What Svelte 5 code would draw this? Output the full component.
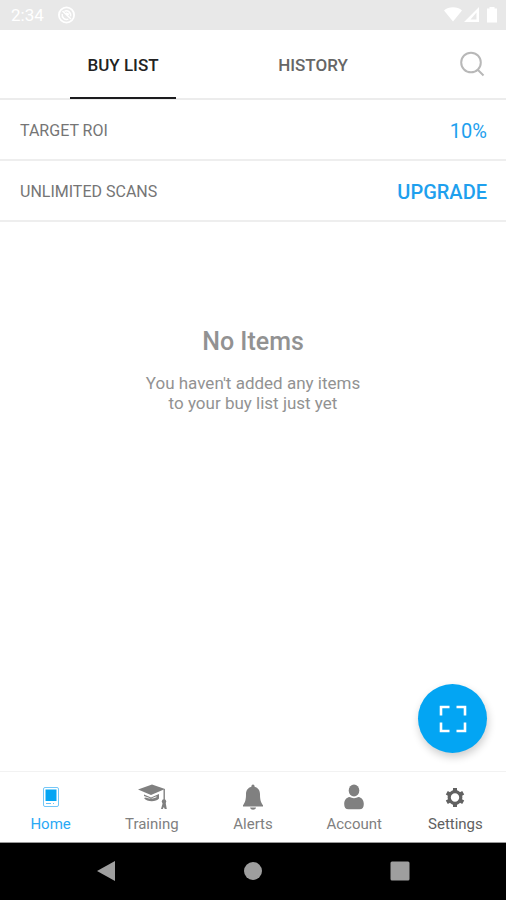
<script>
  const tabs = ['BUY LIST', 'HISTORY'];
  let activeTab = $state('BUY LIST');

  const destinations = ['Home', 'Training', 'Alerts', 'Account', 'Settings'];
  let current = $state('Home');
</script>

<div class="screen">
  <div class="status">
    <span class="time">2:34</span>
    <svg width="18" height="18" viewBox="0 0 18 18" fill="none" stroke="#fff" aria-hidden="true">
      <circle cx="8.500" cy="9" r="7.600" stroke-width="1.800" />
      <path d="M6.500 5.200a4.400 4.400 0 0 1 6 5.200M4.300 8a4.400 4.400 0 0 0 6 5.100M4.500 5l8.500 8M8 7l3 1.500" stroke-width="1.500" />
    </svg>
    <svg class="signals" width="54" height="18" viewBox="0 0 54 18" fill="#fff" aria-hidden="true">
      <path d="M0 4.500C4.500.200 13.500.200 18 4.500L9 15.500z" />
      <path fill-rule="evenodd" d="M35 1v15H20zM32.500 6.500L26.500 13.500H32.500z" />
      <path d="M45.500 1h5v1.500H53V16.500H43V2.500h2.500z" />
    </svg>
  </div>

  <header>
    <div class="tabs" role="tablist">
      {#each tabs as tab}
        <button class="tab" role="tab" aria-selected={activeTab === tab} onclick={() => (activeTab = tab)}>
          <span>{tab}</span>
        </button>
      {/each}
    </div>
    <button class="search" aria-label="Search">
      <svg width="26" height="26" viewBox="0 0 26 26" fill="none" stroke="#b8b8b8" stroke-width="2">
        <circle cx="11" cy="11.500" r="9.800" />
        <path d="M17.500 18.500l6 6" />
      </svg>
    </button>
  </header>

  <section class="row">
    <span>TARGET ROI</span>
    <button class="value">10%</button>
  </section>
  <section class="row">
    <span>UNLIMITED SCANS</span>
    <button class="value strong">UPGRADE</button>
  </section>

  <main>
    <h1>No Items</h1>
    <p>You haven't added any items<br />to your buy list just yet</p>
    <button class="scan" aria-label="Scan">
      <svg width="28" height="28" viewBox="0 0 28 28" fill="none" stroke="#fff" stroke-width="2.600">
        <path d="M2 10.500V2H10.500M17.500 2H26V10.500M26 17.500V26H17.500M10.500 26H2V17.500" />
      </svg>
    </button>
  </main>

  <nav class="bottom">
    {#each destinations as name}
      <button class="item" class:current={current === name} class:dark={name === 'Settings'} onclick={() => (current = name)}>
        <svg width="32" height="28" viewBox="0 0 32 28" fill="currentColor" aria-hidden="true">
          {#if name === 'Home'}
            <rect x="8.500" y="4.500" width="15" height="19" rx="1.500" fill="none" stroke="currentColor" opacity=".65" />
            <path d="M10.500 6.500h11v11.500h-11z" fill="#03a5f3" />
            <path d="M11 20.500h5M18 20.500h1" fill="none" stroke="currentColor" opacity=".7" />
          {:else if name === 'Training'}
            <path d="M2 6.500L16 1.500l13 4.500-14 6z" />
            <path d="M8 11.500l7 3 8-3.500v4.500c-3 3.800-12 3.800-15-.500l2-.500c2.500 1.300 7 1.500 10.500-.200v-1l-5.500 2.200-7-2.500z" />
            <path d="M28.200 6v11" fill="none" stroke="currentColor" stroke-width="1.400" />
            <circle cx="28" cy="18.500" r="2.200" />
            <path d="M27 19h2.500l1.300 7h-2l-1-2-1 2h-1.800z" />
          {:else if name === 'Alerts'}
            <path d="M16 1.500c1.200 0 1.600 1 1.600 2.200 3.700 1 5.400 4 5.400 7.500 0 5.500.800 8 3 11V23.500H6v-1.300c2.200-3 3-5.500 3-11 0-3.500 1.700-6.500 5.400-7.500 0-1.200.400-2.200 1.600-2.200z" />
            <path d="M13 24.500h6c-.500 1.800-1.500 2.200-3 2.200s-2.500-.400-3-2.200z" />
          {:else if name === 'Account'}
            <ellipse cx="16" cy="7.500" rx="5.300" ry="6" />
            <path d="M11.500 14c2.800 1.500 6.200 1.500 9 0 3.600.700 5.300 3.500 5.300 7 0 3.500-1.300 5.200-4.300 5.200h-11c-3 0-4.300-1.700-4.300-5.200 0-3.500 1.700-6.300 5.300-7z" />
          {:else}
            <circle cx="16" cy="14.500" r="5.800" fill="none" stroke="currentColor" stroke-width="3.200" />
            <path d="M16 5v3M16 21v3M7.800 9.700l2.600 1.500M21.600 17.800l2.600 1.500M24.200 9.700l-2.600 1.500M10.400 17.800l-2.600 1.500" fill="none" stroke="currentColor" stroke-width="4" />
          {/if}
        </svg>
        <span>{name}</span>
      </button>
    {/each}
  </nav>

  <div class="system">
    <button aria-label="Back">
      <svg width="20" height="22" viewBox="0 0 20 22" fill="#9e9e9e"><path d="M1 11L19 1v20z" /></svg>
    </button>
    <button aria-label="Home screen">
      <svg width="20" height="20" viewBox="0 0 20 20" fill="#9e9e9e"><circle cx="10" cy="10" r="9" /></svg>
    </button>
    <button aria-label="Recent apps">
      <svg width="20" height="20" viewBox="0 0 20 20" fill="#9e9e9e"><rect x=".500" y=".500" width="19" height="19" rx="1.500" /></svg>
    </button>
  </div>
</div>

<style>
  .screen {
    display: flex;
    flex-direction: column;
    min-height: 100vh;
    background: #fff;
    color: #757575;
    font-family: Roboto, 'Liberation Sans', sans-serif;
  }

  button {
    margin: 0;
    padding: 0;
    border: 0;
    background: none;
    color: inherit;
    font: inherit;
    cursor: pointer;
  }

  svg {
    display: block;
  }

  .status {
    display: flex;
    align-items: center;
    gap: 14px;
    height: 30px;
    padding: 0 8px 0 11px;
    box-sizing: border-box;
    background: #e8e8e8;
    color: #fff;
    font-size: 17px;
  }

  .signals {
    margin-left: auto;
  }

  header {
    display: flex;
    height: 68px;
    padding: 0 20px 0 28px;
    border-bottom: 2px solid #ececec;
  }

  .tabs {
    display: flex;
    flex: 1;
  }

  .tab {
    display: flex;
    flex: 1;
    justify-content: center;
    margin-bottom: -1px;
    font-size: 17px;
    font-weight: 500;
    color: #666;
  }

  .tab span {
    display: flex;
    align-items: center;
    height: 100%;
    padding: 3px 17px 0;
    border-bottom: 2px solid transparent;
    box-sizing: border-box;
  }

  .tab[aria-selected='true'] span {
    border-color: #1c1c1e;
    color: #222;
  }

  .search {
    display: flex;
    align-items: center;
    justify-content: flex-end;
    width: 78px;
  }

  .row {
    display: flex;
    align-items: center;
    justify-content: space-between;
    height: 57px;
    padding: 2px 19px 0 20px;
    border-bottom: 2px solid #eee;
    font-size: 16px;
  }

  .value {
    color: #1ea0ee;
    font-size: 20px;
  }

  .strong {
    font-weight: 500;
  }

  main {
    position: relative;
    flex: 1;
    padding-top: 105px;
    text-align: center;
    color: #929292;
  }

  h1 {
    margin: 0;
    font-size: 25px;
    line-height: 30px;
    font-weight: 500;
  }

  p {
    margin: 16px 0 0;
    font-size: 17px;
    line-height: 20px;
  }

  .scan {
    position: absolute;
    right: 19px;
    bottom: 18px;
    display: grid;
    place-items: center;
    width: 69px;
    height: 69px;
    border-radius: 50%;
    background: #03a5f3;
    box-shadow: 1px 4px 8px rgba(0, 0, 0, 0.2);
  }

  .bottom {
    display: flex;
    height: 70px;
    border-top: 1px solid #f2f2f2;
    border-bottom: 1px solid #999;
  }

  .item {
    display: flex;
    flex: 1;
    flex-direction: column;
    align-items: center;
    gap: 3px;
    padding-top: 11px;
    font-size: 15px;
    line-height: 20px;
    color: #808080;
  }

  .item.dark {
    color: #616161;
  }

  .item.current {
    color: #2aa9f5;
  }

  .system {
    display: flex;
    height: 55px;
    padding: 0 33px 2px;
    background: #000;
  }

  .system button {
    display: grid;
    flex: 1;
    place-items: center;
  }
</style>
